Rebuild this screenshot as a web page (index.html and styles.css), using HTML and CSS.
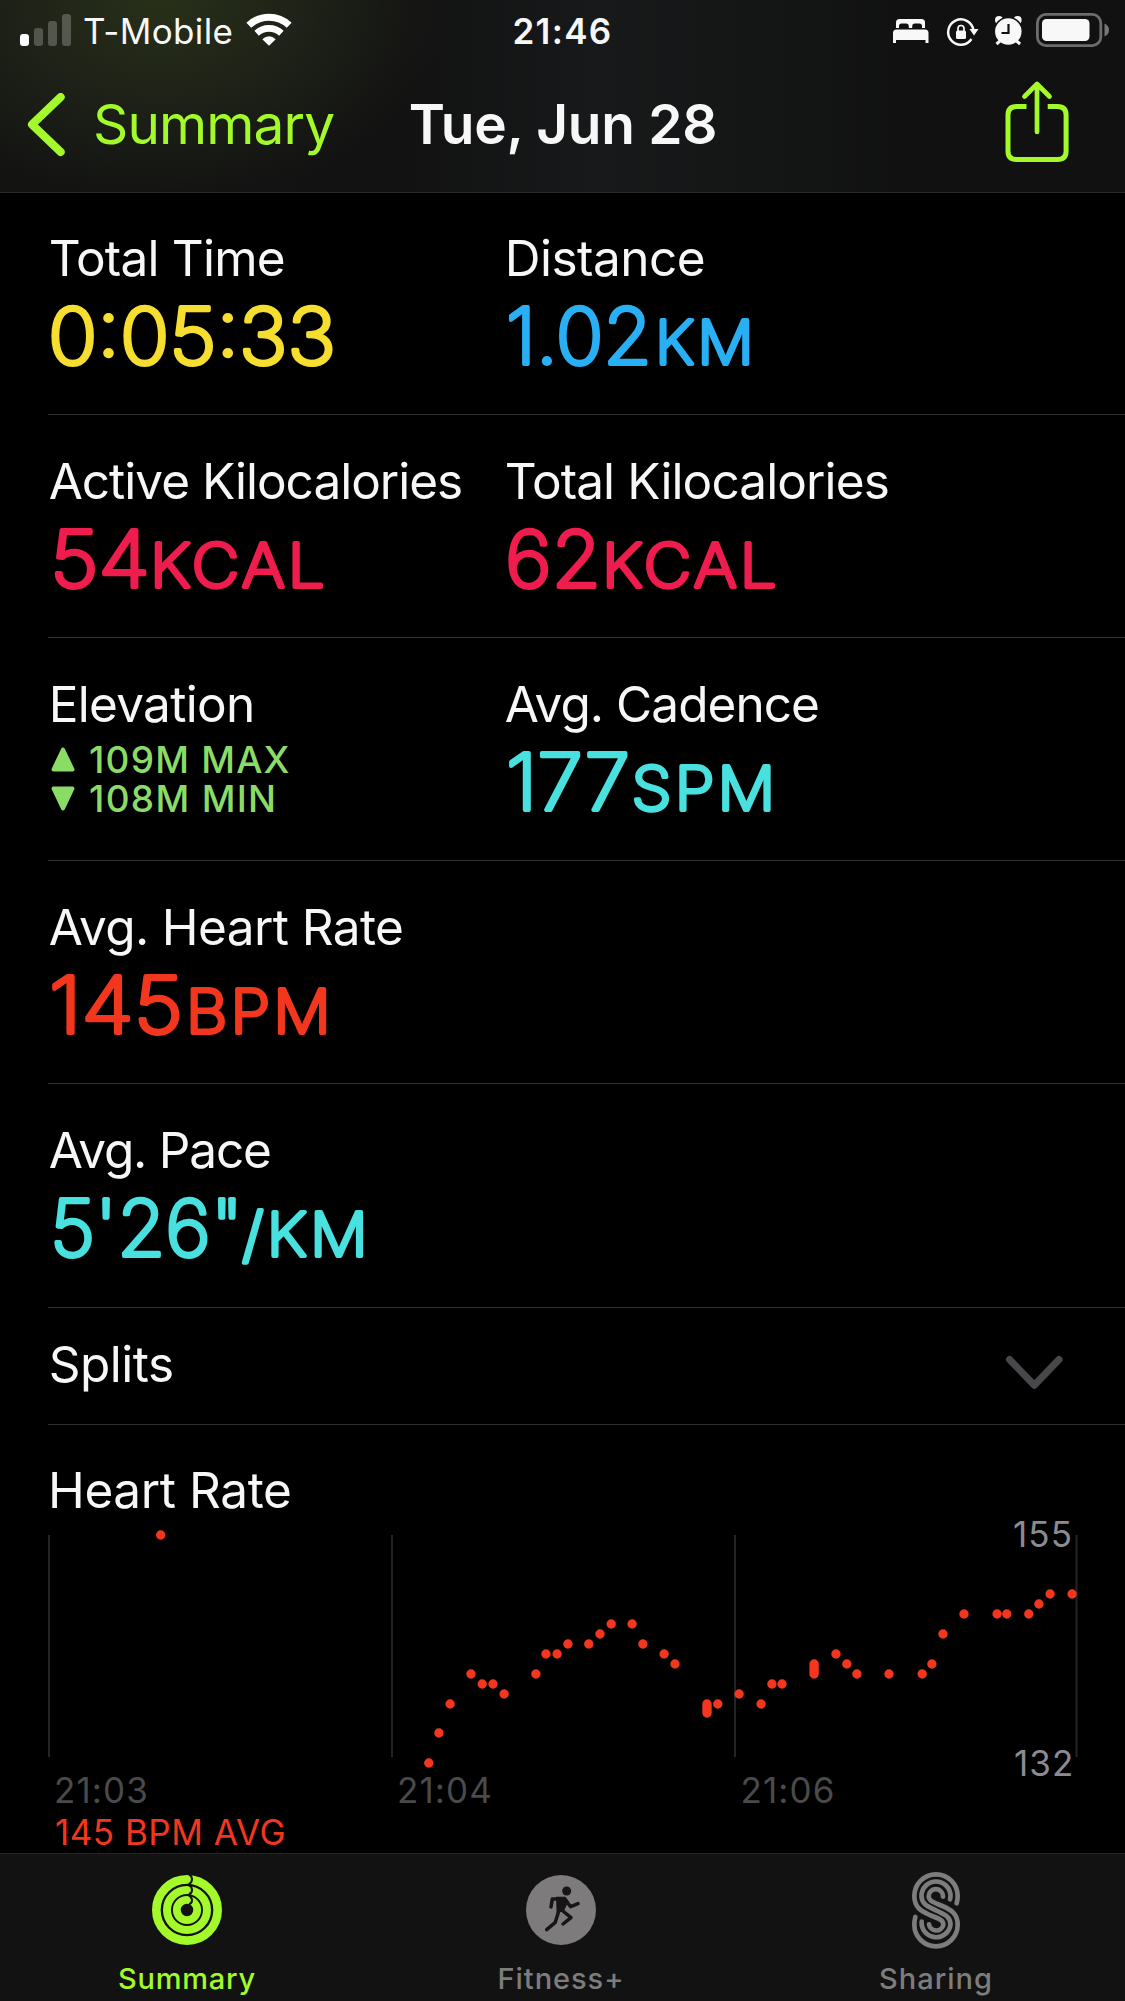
FILE: index.html
```
<!DOCTYPE html>
<html lang="en">
<head>
<meta charset="utf-8">
<title>Tue, Jun 28</title>
<link rel="stylesheet" href="styles.css">
</head>
<body>
<div class="screen">
  <header class="header">
    <div class="status">
      <div class="status-left">
        <svg width="83" height="62" viewBox="0 0 83 62" fill="#fff">
          <rect x="20" y="34" width="9" height="12" rx="3"/>
          <g fill-opacity=".23">
            <rect x="34" y="28" width="9" height="18" rx="3"/>
            <rect x="48" y="21" width="9" height="25" rx="3"/>
            <rect x="62" y="14" width="9" height="32" rx="3"/>
          </g>
        </svg>
        <span class="carrier">T-Mobile</span>
        <svg width="52" height="62" viewBox="243 0 52 62" fill="none" stroke="#fff">
          <path d="M248.8 25.2A29.5 29.5 0 0 1 289.2 25.2" stroke-width="7"/>
          <path d="M256.6 33.2A18.3 18.3 0 0 1 281.4 33.2" stroke-width="6.6"/>
          <path d="M269 45.7L262.3 39.2Q269 33.4 275.7 39.2Z" fill="#fff" stroke="none"/>
        </svg>
      </div>
      <span class="clock">21:46</span>
      <svg class="status-right" width="240" height="62" viewBox="885 0 240 62">
        <g fill="#f8f8f8">
          <path d="M896 28V22.500q0-3.500 3.500-3.500H921.500q3.500 0 3.500 3.500V28h-3v-2q0-2.500-2.500-2.500h-5q-2.300 0-2.300 2.500V28h-3.400v-2q0-2.500-2.300-2.500h-5q-2.500 0-2.500 2.500V28Z"/>
          <path d="M893 43V33q0-3.500 3.500-3.500H925q3.500 0 3.500 3.500V43h-3v-3H896v3Z"/>
          <rect x="956" y="30.500" width="10" height="8.500" rx="1.500"/>
          <path d="M969.500 29H978.500L974 35.500Z"/>
          <circle cx="999" cy="20" r="4"/>
          <circle cx="1017.600" cy="20" r="4"/>
          <circle cx="1008.300" cy="31.500" r="14" stroke="#121212" stroke-width="1.500"/>
          <rect x="1042" y="19" width="47.500" height="22" rx="4.500"/>
          <path d="M1104.500 23.500Q1109 25.500 1109 30T1104.500 36.500Z" fill="#777"/>
        </g>
        <g fill="none" stroke="#f8f8f8">
          <path d="M973.400 30A12.700 12.700 0 1 0 971.500 39" stroke-width="2.400"/>
          <path d="M958 31v-2.500a3 3 0 0 1 6 0V31" stroke-width="1.700"/>
          <path d="M1000 41l-3.500 3M1016.600 41l3.500 3" stroke-width="3"/>
        </g>
        <path d="M1008.500 24V33H1001.500" fill="none" stroke="#111" stroke-width="2.200"/>
        <rect x="1037.400" y="14.400" width="63.400" height="31.200" rx="8.500" fill="none" stroke="#6c6c6c" stroke-width="2.800"/>
      </svg>
    </div>
    <nav class="nav">
      <a class="back">
        <svg width="40" height="64" viewBox="26 93 40 64" fill="none" stroke="#a3f92a" stroke-width="8" stroke-linecap="round" stroke-linejoin="round"><path d="M60.700 97L32 124.500L60.700 152"/></svg>
        <span>Summary</span>
      </a>
      <h1 class="title">Tue, Jun 28</h1>
      <svg class="share" width="66" height="84" viewBox="1003.500 80 66 84" fill="none" stroke="#a3f92a">
        <path d="M1026 106.500H1016Q1007.500 106.500 1007.500 115V151Q1007.500 159.500 1016 159.500H1057Q1065.600 159.500 1065.600 151V115Q1065.600 106.500 1057 106.500H1047.200" stroke-width="5"/>
        <path d="M1036.500 84.500V132M1024 96.500L1036.500 84L1049 96.500" stroke-width="4.700" stroke-linecap="round" stroke-linejoin="round"/>
      </svg>
    </nav>
  </header>

  <main class="content">
    <section class="row row-first">
      <div class="stat total-time"><h2>Total Time</h2>
        <svg class="value yellow" width="400" height="100" viewBox="48 0 400 100"><text x="48" y="75.500" textLength="288" lengthAdjust="spacingAndGlyphs">0:05:33</text></svg></div>
      <div class="stat distance"><h2>Distance</h2>
        <svg class="value blue" width="400" height="100" viewBox="504 0 400 100"><text x="506" y="75.500" textLength="146" lengthAdjust="spacingAndGlyphs">1.02</text><text class="unit" x="655" y="75.500" textLength="102" lengthAdjust="spacingAndGlyphs">KM</text></svg></div>
    </section>
    <section class="row">
      <div class="stat active-kcal"><h2>Active Kilocalories</h2>
        <svg class="value pink" width="400" height="100" viewBox="48 0 400 100"><text x="50" y="75.500" textLength="100" lengthAdjust="spacingAndGlyphs">54</text><text class="unit" x="150" y="75.500" textLength="178" lengthAdjust="spacingAndGlyphs">KCAL</text></svg></div>
      <div class="stat total-kcal"><h2>Total Kilocalories</h2>
        <svg class="value pink" width="400" height="100" viewBox="504 0 400 100"><text x="505" y="75.500" textLength="96" lengthAdjust="spacingAndGlyphs">62</text><text class="unit" x="602" y="75.500" textLength="178" lengthAdjust="spacingAndGlyphs">KCAL</text></svg></div>
    </section>
    <section class="row">
      <div class="stat elevation"><h2>Elevation</h2>
        <div class="range">
          <svg width="26" height="27" viewBox="0 0 26 27"><path d="M13 3.500L22.500 23.500H3.500Z"/></svg><span>109M MAX</span>
          <svg width="26" height="27" viewBox="0 0 26 27"><path d="M13 23.500L22.500 3.500H3.500Z"/></svg><span class="min">108M MIN</span>
        </div></div>
      <div class="stat cadence"><h2>Avg. Cadence</h2>
        <svg class="value teal" width="400" height="100" viewBox="504 0 400 100"><text x="506" y="75.500" textLength="124" lengthAdjust="spacingAndGlyphs">177</text><text class="unit" x="631.500" y="75.500" textLength="147" lengthAdjust="spacingAndGlyphs">SPM</text></svg></div>
    </section>
    <section class="row">
      <div class="stat heart"><h2>Avg. Heart Rate</h2>
        <svg class="value red" width="400" height="100" viewBox="48 0 400 100"><text x="49" y="75.500" textLength="134" lengthAdjust="spacingAndGlyphs">145</text><text class="unit" x="186" y="75.500" textLength="148" lengthAdjust="spacingAndGlyphs">BPM</text></svg></div>
    </section>
    <section class="row row-last">
      <div class="stat pace"><h2>Avg. Pace</h2>
        <svg class="value teal" width="400" height="100" viewBox="48 0 400 100"><text x="50" y="75.500" textLength="193" lengthAdjust="spacingAndGlyphs">5'26"</text><text class="unit" x="242" y="75.500" textLength="129" lengthAdjust="spacingAndGlyphs">/KM</text></svg></div>
    </section>
    <section class="row splits">
      <h2>Splits</h2>
      <svg width="60" height="36" viewBox="1004 1354 60 36" fill="none" stroke="#48484b" stroke-width="7" stroke-linecap="round" stroke-linejoin="round"><path d="M1009.500 1359.500L1034.300 1385.200L1059 1359.500"/></svg>
    </section>
    <section class="hr">
      <h2>Heart Rate</h2>
      <svg class="chart" width="1125" height="333" viewBox="0 1520 1125 333">
        <path class="grid" d="M49 1535V1757M392 1535V1757M735 1535V1757M1076.500 1535V1757"/>
        <path class="dots" d="M160.700 1535h0M428.800 1763h0M438.900 1733h0M450.100 1704h0M471 1674h0M482.200 1684h0M493 1684h0M504.100 1694h0M535.900 1674h0M546 1654h0M557.100 1654h0M567.900 1644h0M588.800 1644h0M600 1634h0M611.200 1624h0M632.100 1624h0M642.900 1644h0M664.100 1654h0M675 1664h0M707 1704v9M717.800 1704h0M739.100 1694h0M761.100 1704h0M771.900 1684h0M782 1684h0M814.100 1664v10M836 1654h0M846.800 1664h0M856.900 1674h0M889 1674h0M922.200 1674h0M931.900 1664h0M943 1634h0M964 1614h0M997.100 1614h0M1006.800 1614h0M1028.800 1614h0M1038.900 1604h0M1050.100 1594h0M1072.100 1594h0"/>
        <g class="bounds"><text x="1013" y="1547">155</text><text x="1014" y="1776">132</text></g>
        <g class="times"><text x="54" y="1802.500">21:03</text><text x="397" y="1802.500">21:04</text><text x="740.500" y="1802.500">21:06</text></g>
        <text class="avg" x="55" y="1845">145 BPM AVG</text>
      </svg>
    </section>
  </main>

  <footer class="tabs">
    <a class="tab active">
      <svg width="80" height="80" viewBox="141 60 240 240">
        <g fill="none" stroke="#a3f92a"><circle cx="261" cy="180" r="92" stroke-width="26"/><circle cx="261" cy="180" r="60" stroke-width="24"/><circle cx="261" cy="180" r="30.500" stroke-width="23.500"/></g>
        <g fill="none" stroke="#121212" stroke-width="6"><path d="M267 73Q276 78 276 88T266 102"/><path d="M266 105Q276 109 276 120T266 133"/><path d="M266 136Q276 141 276 151T267 163"/></g>
      </svg>
      <span>Summary</span>
    </a>
    <a class="tab fitness">
      <svg width="80" height="80" viewBox="123 60 240 240">
        <circle cx="243" cy="180" r="105" fill="#7d7b7c"/>
        <circle cx="260" cy="123" r="13.500" fill="#171516"/>
        <path d="M228 140H256L266 153L252 182L230 190Z" fill="#171516"/>
        <g fill="none" stroke="#171516" stroke-width="10.500" stroke-linecap="round" stroke-linejoin="round"><path d="M213 171L217 147H240"/><path d="M256 150L272 170L294 161"/><path d="M245 180L273 203L249 222"/><path d="M236 184L226 217L200 239"/></g>
      </svg>
      <span>Fitness+</span>
    </a>
    <a class="tab sharing">
      <svg width="80" height="80" viewBox="139 60 240 240" fill="none" stroke="#7d7d7d" stroke-width="14" stroke-linecap="round">
        <path d="M321 160C323 153 324 146 324 138A65 65 0 0 0 194 138C194 172 214 183 240 195C268 207 281 209 281 225A22 22 0 0 1 238 223"/>
        <path d="M301 148Q302.500 143 302.500 138A43.500 43.500 0 0 0 215.500 138C215.500 163 237 170 259 181C285 193 302.500 200 302.500 224A43.500 43.500 0 0 1 216 215"/>
        <path d="M280 140A21.500 21.500 0 1 0 237 138C237 154 253 157 278 168C306 180 324 192 324 224A65 65 0 0 1 194 224Q194 212 197 201"/>
      </svg>
      <span>Sharing</span>
    </a>
  </footer>
</div>
</body>
</html>
```
FILE: styles.css
```
* { box-sizing: border-box; }
body { margin: 0; background: #000; color: #f7f7f7; font-family: Inter, "Liberation Sans", sans-serif; }
svg { display: block; flex: none; }
h1, h2 { margin: 0; font-weight: 400; }
.screen { display: flex; flex-direction: column; width: 1125px; height: 2001px; overflow: hidden; }

.header {
  height: 193px; flex: none; border-bottom: 1px solid #292929;
  background:
    radial-gradient(ellipse 290px 200px at 160px 0, #283018 0%, #1f2318 45%, rgba(24, 26, 22, 0) 100%),
    linear-gradient(90deg, #131412 0, #121212 400px, #17191a 600px, #141616 760px, #111 900px);
}
.status { display: grid; grid-template-columns: 1fr auto 1fr; height: 62px; }
.status-left { display: flex; }
.carrier, .clock { font-size: 35px; line-height: 50px; padding-top: 6px; white-space: nowrap; }
.carrier { width: 160px; letter-spacing: .34px; }
.clock { font-weight: 600; letter-spacing: 1.3px; }
.status-right { justify-self: end; }
.nav { display: grid; grid-template-columns: 1fr auto 1fr; height: 130px; padding: 27px 55px 0 26px; }
.back { display: flex; gap: 27px; color: #a3f92a; font-size: 55px; line-height: 70px; letter-spacing: -.9px; }
.back svg { margin-top: 4px; }
.title { font-size: 55px; font-weight: 600; line-height: 70px; letter-spacing: -.25px; margin-left: 30px; }
.share { justify-self: end; margin-top: -9px; }

.content { flex: none; height: 1660px; }
h2 { font-size: 49.5px; line-height: 60px; letter-spacing: -.8px; white-space: nowrap; }
.row {
  display: grid; grid-template-columns: 456px 1fr; height: 223px; margin-left: 48px;
  padding: 36px 0 0; border-bottom: 1px solid #303030;
}
.row h2 { padding-left: .7px; }
.row-first { height: 222px; padding-top: 35px; }
.row-last { height: 224px; }
.distance h2, .splits h2 { letter-spacing: -.5px; }
.active-kcal h2 { letter-spacing: -1px; }
.total-kcal h2 { letter-spacing: -.89px; }
.cadence h2 { letter-spacing: -.95px; }
.heart h2 { letter-spacing: -.6px; }
.pace h2 { letter-spacing: -1.2px; }
.elevation h2 { letter-spacing: -.7px; }

/* Thin glyphs with a round outline give the rounded numerals. */
.value { font-size: 78px; font-weight: 200; stroke-width: 4px; stroke-linejoin: round; }
.unit { font-size: 60.5px; letter-spacing: 3px; }
.yellow { fill: #f6de31; stroke: #f6de31; }
.blue { fill: #29aff4; stroke: #29aff4; }
.pink { fill: #ee1d4e; stroke: #ee1d4e; }
.teal { fill: #49e1df; stroke: #49e1df; }
.red { fill: #f3371f; stroke: #f3371f; }

.range {
  display: grid; grid-template-columns: 26px auto; column-gap: 13px; justify-content: start; align-items: center;
  margin: 6px 0 0 2px; font-size: 37px; line-height: 39px; font-weight: 500; letter-spacing: 1.2px; color: #8bdc66;
}
.range svg { fill: #8bdc66; stroke: #8bdc66; stroke-width: 4px; stroke-linejoin: round; }
.range .min { letter-spacing: 1.3px; }

.splits { grid-template-columns: 1fr auto; height: 117px; padding: 26px 61px 0 0; }
.splits svg { margin-top: 20px; }

.hr { padding-top: 35px; }
.hr h2 { padding-left: 48px; letter-spacing: -.4px; }
.chart { font-size: 35px; letter-spacing: 1.1px; overflow: visible; }
.grid { stroke: #242424; stroke-width: 2px; }
.dots { fill: none; stroke: #f3371f; stroke-width: 9.4px; stroke-linecap: round; }
.bounds { fill: #8c8b91; }
.times { fill: #4a4a4a; }
.avg { fill: #f3371f; letter-spacing: .5px; }

.tabs {
  display: grid; grid-template-columns: 374px 374px 376px; height: 148px; flex: none;
  padding: 16px 0 0; background: #121212; border-top: 1px solid #272727;
}
.tab { display: flex; flex-direction: column; align-items: center; gap: 11px; font-size: 29px; line-height: 36px; font-weight: 500; letter-spacing: .8px; color: #7d7d7d; }
.active { color: #a3f92a; }
.fitness { letter-spacing: .95px; }
.sharing { letter-spacing: 1px; }
```
